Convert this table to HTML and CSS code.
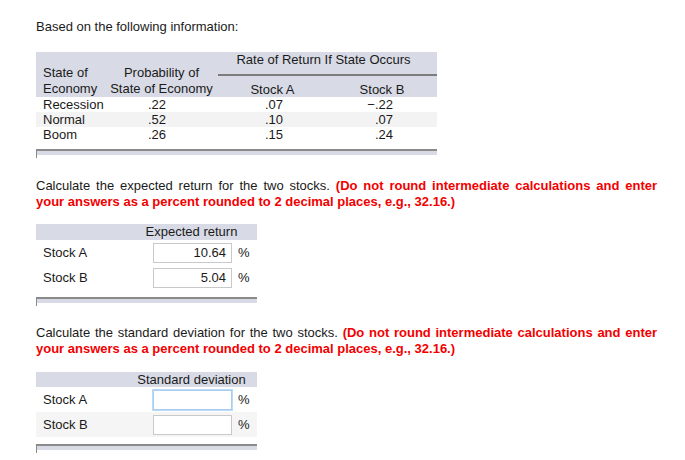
FILE: index.html
```html
<!DOCTYPE html>
<html>
<head>
<meta charset="utf-8">
<link rel="stylesheet" href="styles.css">
</head>
<body>
<div class="page">
  <p class="intro">Based on the following information:</p>

  <div class="dtable">
    <div class="dhead">
      <div class="h-state">State of<br>Economy</div>
      <div class="h-prob">Probability of<br>State of Economy</div>
      <div class="h-rate">Rate of Return If State Occurs</div>
      <div class="h-a">Stock A</div>
      <div class="h-b">Stock B</div>
    </div>
    <div class="drow">
      <div class="c1">Recession</div><div class="c2">.22</div><div class="c3">.07</div><div class="c4">&minus;.22</div>
    </div>
    <div class="drow alt">
      <div class="c1">Normal</div><div class="c2">.52</div><div class="c3">.10</div><div class="c4">.07</div>
    </div>
    <div class="drow">
      <div class="c1">Boom</div><div class="c2">.26</div><div class="c3">.15</div><div class="c4">.24</div>
    </div>
    <div class="foot"></div>
  </div>

  <p class="question q1">Calculate the expected return for the two stocks. <b class="note">(Do not round intermediate calculations and enter your answers as a percent rounded to 2 decimal places, e.g., 32.16.)</b></p>

  <div class="atable t2">
    <div class="ahead"><div class="ahead-label">Expected return</div></div>
    <div class="arow">
      <div class="alabel">Stock A</div>
      <div class="abox">10.64</div>
      <div class="apct">%</div>
    </div>
    <div class="arow">
      <div class="alabel">Stock B</div>
      <div class="abox">5.04</div>
      <div class="apct">%</div>
    </div>
    <div class="foot"></div>
  </div>

  <p class="question q2">Calculate the standard deviation for the two stocks. <b class="note">(Do not round intermediate calculations and enter your answers as a percent rounded to 2 decimal places, e.g., 32.16.)</b></p>

  <div class="atable t3">
    <div class="ahead"><div class="ahead-label">Standard deviation</div></div>
    <div class="arow">
      <div class="alabel">Stock A</div>
      <div class="abox focus"></div>
      <div class="apct">%</div>
    </div>
    <div class="arow alt">
      <div class="alabel">Stock B</div>
      <div class="abox"></div>
      <div class="apct">%</div>
    </div>
    <div class="foot"></div>
  </div>
</div>
</body>
</html>
```

FILE: styles.css
```css
html, body {
  margin: 0;
  padding: 0;
  background: #ffffff;
}

body {
  font-family: "Liberation Sans", Arial, Helvetica, sans-serif;
  font-size: 13px;
  color: #1a1a1a;
}

.page {
  width: 621px;
  padding: 19px 0 0 36px;
}

p {
  margin: 0;
  line-height: 16px;
}

/* ---------- data table ---------- */
.dtable {
  width: 401px;
  margin-top: 17px;
}

.dhead {
  display: grid;
  grid-template-columns: 69px 113px 109px 110px;
  grid-template-rows: 24px 21px;
  background: #d8dbe6;
  line-height: 16px;
}

.h-state {
  grid-column: 1;
  grid-row: 1 / 3;
  align-self: end;
  padding-left: 7px;
  white-space: nowrap;
}

.h-prob {
  grid-column: 2;
  grid-row: 1 / 3;
  align-self: end;
  text-align: center;
  white-space: nowrap;
}

.h-rate {
  grid-column: 3 / 5;
  grid-row: 1;
  border-bottom: 2px solid #7c7c7c;
  text-align: center;
  padding-right: 8px;
  line-height: 15px;
}

.h-a, .h-b {
  grid-row: 2;
  align-self: end;
  text-align: center;
  line-height: 15px;
}

.h-a { grid-column: 3; }
.h-b { grid-column: 4; }

.drow {
  display: grid;
  grid-template-columns: 69px 113px 109px 110px;
  height: 15px;
  line-height: 15px;
}

.drow.alt {
  background: #f3f3f3;
}

.c1 { padding-left: 7px; white-space: nowrap; }
.c2 { text-align: right; padding-right: 52px; }
.c3 { text-align: right; padding-right: 44px; }
.c4 { text-align: right; padding-right: 44px; }

.foot {
  margin-top: 7px;
  height: 7px;
  border-top: 2px solid #8a8a8a;
  border-left: 1px solid #8a8a8a;
  background: linear-gradient(#d8dbe6 0 4px, transparent 4px);
}

/* ---------- questions ---------- */
.question {
  text-align: justify;
}

.q1 { margin-top: 20px; }
.q2 { margin-top: 19px; }

.note {
  color: #f20000;
  font-weight: bold;
}

/* ---------- answer tables ---------- */
.atable {
  width: 221px;
}

.t2 { margin-top: 14px; }
.t3 { margin-top: 15px; }

.ahead {
  display: grid;
  grid-template-columns: 114px 83px 24px;
  height: 16px;
  background: #d8dbe6;
  line-height: 16px;
}

.t3 .ahead {
  height: 15px;
  line-height: 15px;
}

.ahead-label {
  grid-column: 2;
  display: flex;
  justify-content: center;
  white-space: nowrap;
}

.arow {
  display: grid;
  grid-template-columns: 114px 83px 24px;
  align-items: center;
  height: 25px;
}

.arow.alt {
  background: #f5f5f5;
}

.alabel {
  padding-left: 7px;
}

.abox {
  margin-left: 3px;
  width: 79px;
  height: 20px;
  box-sizing: border-box;
  border: 1px solid #c9c9c9;
  background: #ffffff;
  text-align: right;
  padding-right: 5px;
  line-height: 18px;
}

.abox.focus {
  border-color: #a8cdf0;
  box-shadow: 0 0 0 1px #bcdaf5;
}

.apct {
  padding-left: 5px;
}
```
